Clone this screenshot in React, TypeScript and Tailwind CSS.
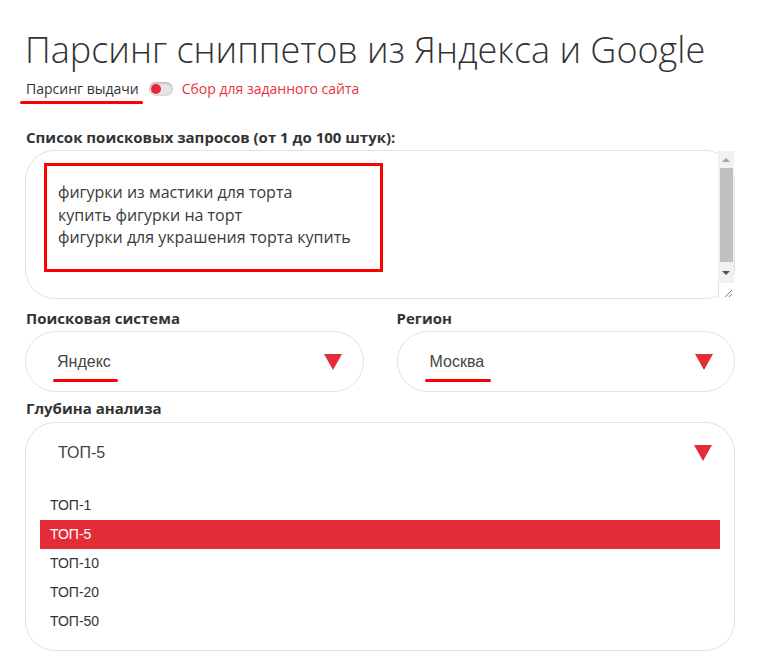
import React from "react";

const Tri = () => (
  <svg width="18" height="16" viewBox="0 0 18 16" className="block">
    <polygon points="0,0 18,0 9,16" fill="#e32d38" />
  </svg>
);

export default function App() {
  const opts = ["ТОП-1", "ТОП-5", "ТОП-10", "ТОП-20", "ТОП-50"];
  return (
    <div className="w-[780px] h-[651px] overflow-hidden bg-white pl-[25px] pr-[45px] text-[#333] font-['Open_Sans',sans-serif]">
      <h1 className="mt-[25px] text-[36px] leading-[49px] font-light text-[#333] tracking-[0px] whitespace-nowrap">
        Парсинг сниппетов из Яндекса и Google
      </h1>
      <div className="mt-[5px] flex items-center h-[20px] text-[14px] leading-[20px]">
        <span className="relative ml-[1px]">
          Парсинг выдачи
          <span className="absolute left-[-6px] right-[-4px] -bottom-[5px] h-[3px] rounded-full bg-[#ff0000]" />
        </span>
        <span className="ml-[10px] relative w-[24px] h-[14px] rounded-full bg-[#e4e4e4] shadow-[inset_0_1px_3px_rgba(0,0,0,0.25)]">
          <span className="absolute left-[2px] top-[2px] w-[10px] h-[10px] rounded-full bg-[#e8283a]" />
        </span>
        <span className="ml-[9px] text-[#e8333f]">Сбор для заданного сайта</span>
      </div>

      <div className="mt-[28px] text-[15px] leading-[20px] font-bold text-[#333] ml-[1px]">
        Список поисковых запросов (от 1 до 100 штук):
      </div>
      <div className="relative mt-[3px] h-[149px] rounded-[30px] border border-[#e2e2e2]">
        <div className="absolute left-[18px] top-[12px] w-[339px] h-[109px] border-[3px] border-[#ff0000] pl-[11px] pt-[15px] text-[16px] leading-[22.5px] text-[#3a3a3a]">
          <div>фигурки из мастики для торта</div>
          <div>купить фигурки на торт</div>
          <div>фигурки для украшения торта купить</div>
        </div>
        <div className="absolute right-[0px] top-[0px] w-[16px] h-[132px] bg-[#f1f1f1] flex flex-col items-center">
          <div className="h-[17px] flex items-center justify-center">
            <svg width="8" height="4" viewBox="0 0 8 4"><polygon points="0,4 8,4 4,0" fill="#a3a3a3" /></svg>
          </div>
          <div className="w-[13px] h-[94px] bg-[#c1c1c1]" />
          <div className="flex-1 flex items-center justify-center">
            <svg width="8" height="4" viewBox="0 0 8 4"><polygon points="0,0 8,0 4,4" fill="#505050" /></svg>
          </div>
        </div>
        <div className="absolute right-[0px] top-[132px] w-[16px] h-[16px] bg-white border-l border-[#e2e2e2] flex items-end justify-end">
          <svg width="10" height="10" viewBox="0 0 10 10" className="mb-[1px] mr-[1px]">
            <line x1="2" y1="9" x2="9" y2="2" stroke="#777" strokeWidth="1" />
            <line x1="6" y1="9" x2="9" y2="6" stroke="#777" strokeWidth="1" />
          </svg>
        </div>
      </div>

      <div className="mt-[9px] grid grid-cols-2 gap-x-[33px]">
        <div className="text-[15px] leading-[20px] font-bold ml-[1px]">Поисковая система</div>
        <div className="text-[15px] leading-[20px] font-bold">Регион</div>
        <div className="relative mt-[3px] h-[61px] rounded-full border border-[#e2e2e2] flex items-center justify-between pl-[31px] pr-[21px] font-['Liberation_Sans',Arial,sans-serif] text-[16px] text-[#444]">
          <span>Яндекс</span>
          <Tri />
          <span className="absolute left-[27px] top-[47px] w-[65px] h-[3px] rounded-full bg-[#ff0000]" />
        </div>
        <div className="relative mt-[3px] h-[61px] rounded-full border border-[#e2e2e2] flex items-center justify-between pl-[32px] pr-[21px] font-['Liberation_Sans',Arial,sans-serif] text-[16px] text-[#444]">
          <span>Москва</span>
          <Tri />
          <span className="absolute left-[27px] top-[47px] w-[66px] h-[3px] rounded-full bg-[#ff0000]" />
        </div>
      </div>

      <div className="mt-[6px] text-[15px] leading-[20px] font-bold ml-[1px]">Глубина анализа</div>
      <div className="mt-[4px] h-[229px] rounded-[30px] border border-[#e2e2e2] font-['Liberation_Sans',Arial,sans-serif]">
        <div className="h-[60px] flex items-center justify-between pl-[32px] pr-[22px] text-[16px] text-[#444]">
          <span>ТОП-5</span>
          <Tri />
        </div>
        <div className="mt-[8px] mx-[14px]">
          {opts.map((o) => (
            <div
              key={o}
              className={
                o === "ТОП-5"
                  ? "h-[29px] leading-[29px] pl-[10px] text-[14px] bg-[#e32d36] text-white"
                  : "h-[29px] leading-[29px] pl-[10px] text-[14px] text-[#333]"
              }
            >
              {o}
            </div>
          ))}
        </div>
      </div>
    </div>
  );
}
